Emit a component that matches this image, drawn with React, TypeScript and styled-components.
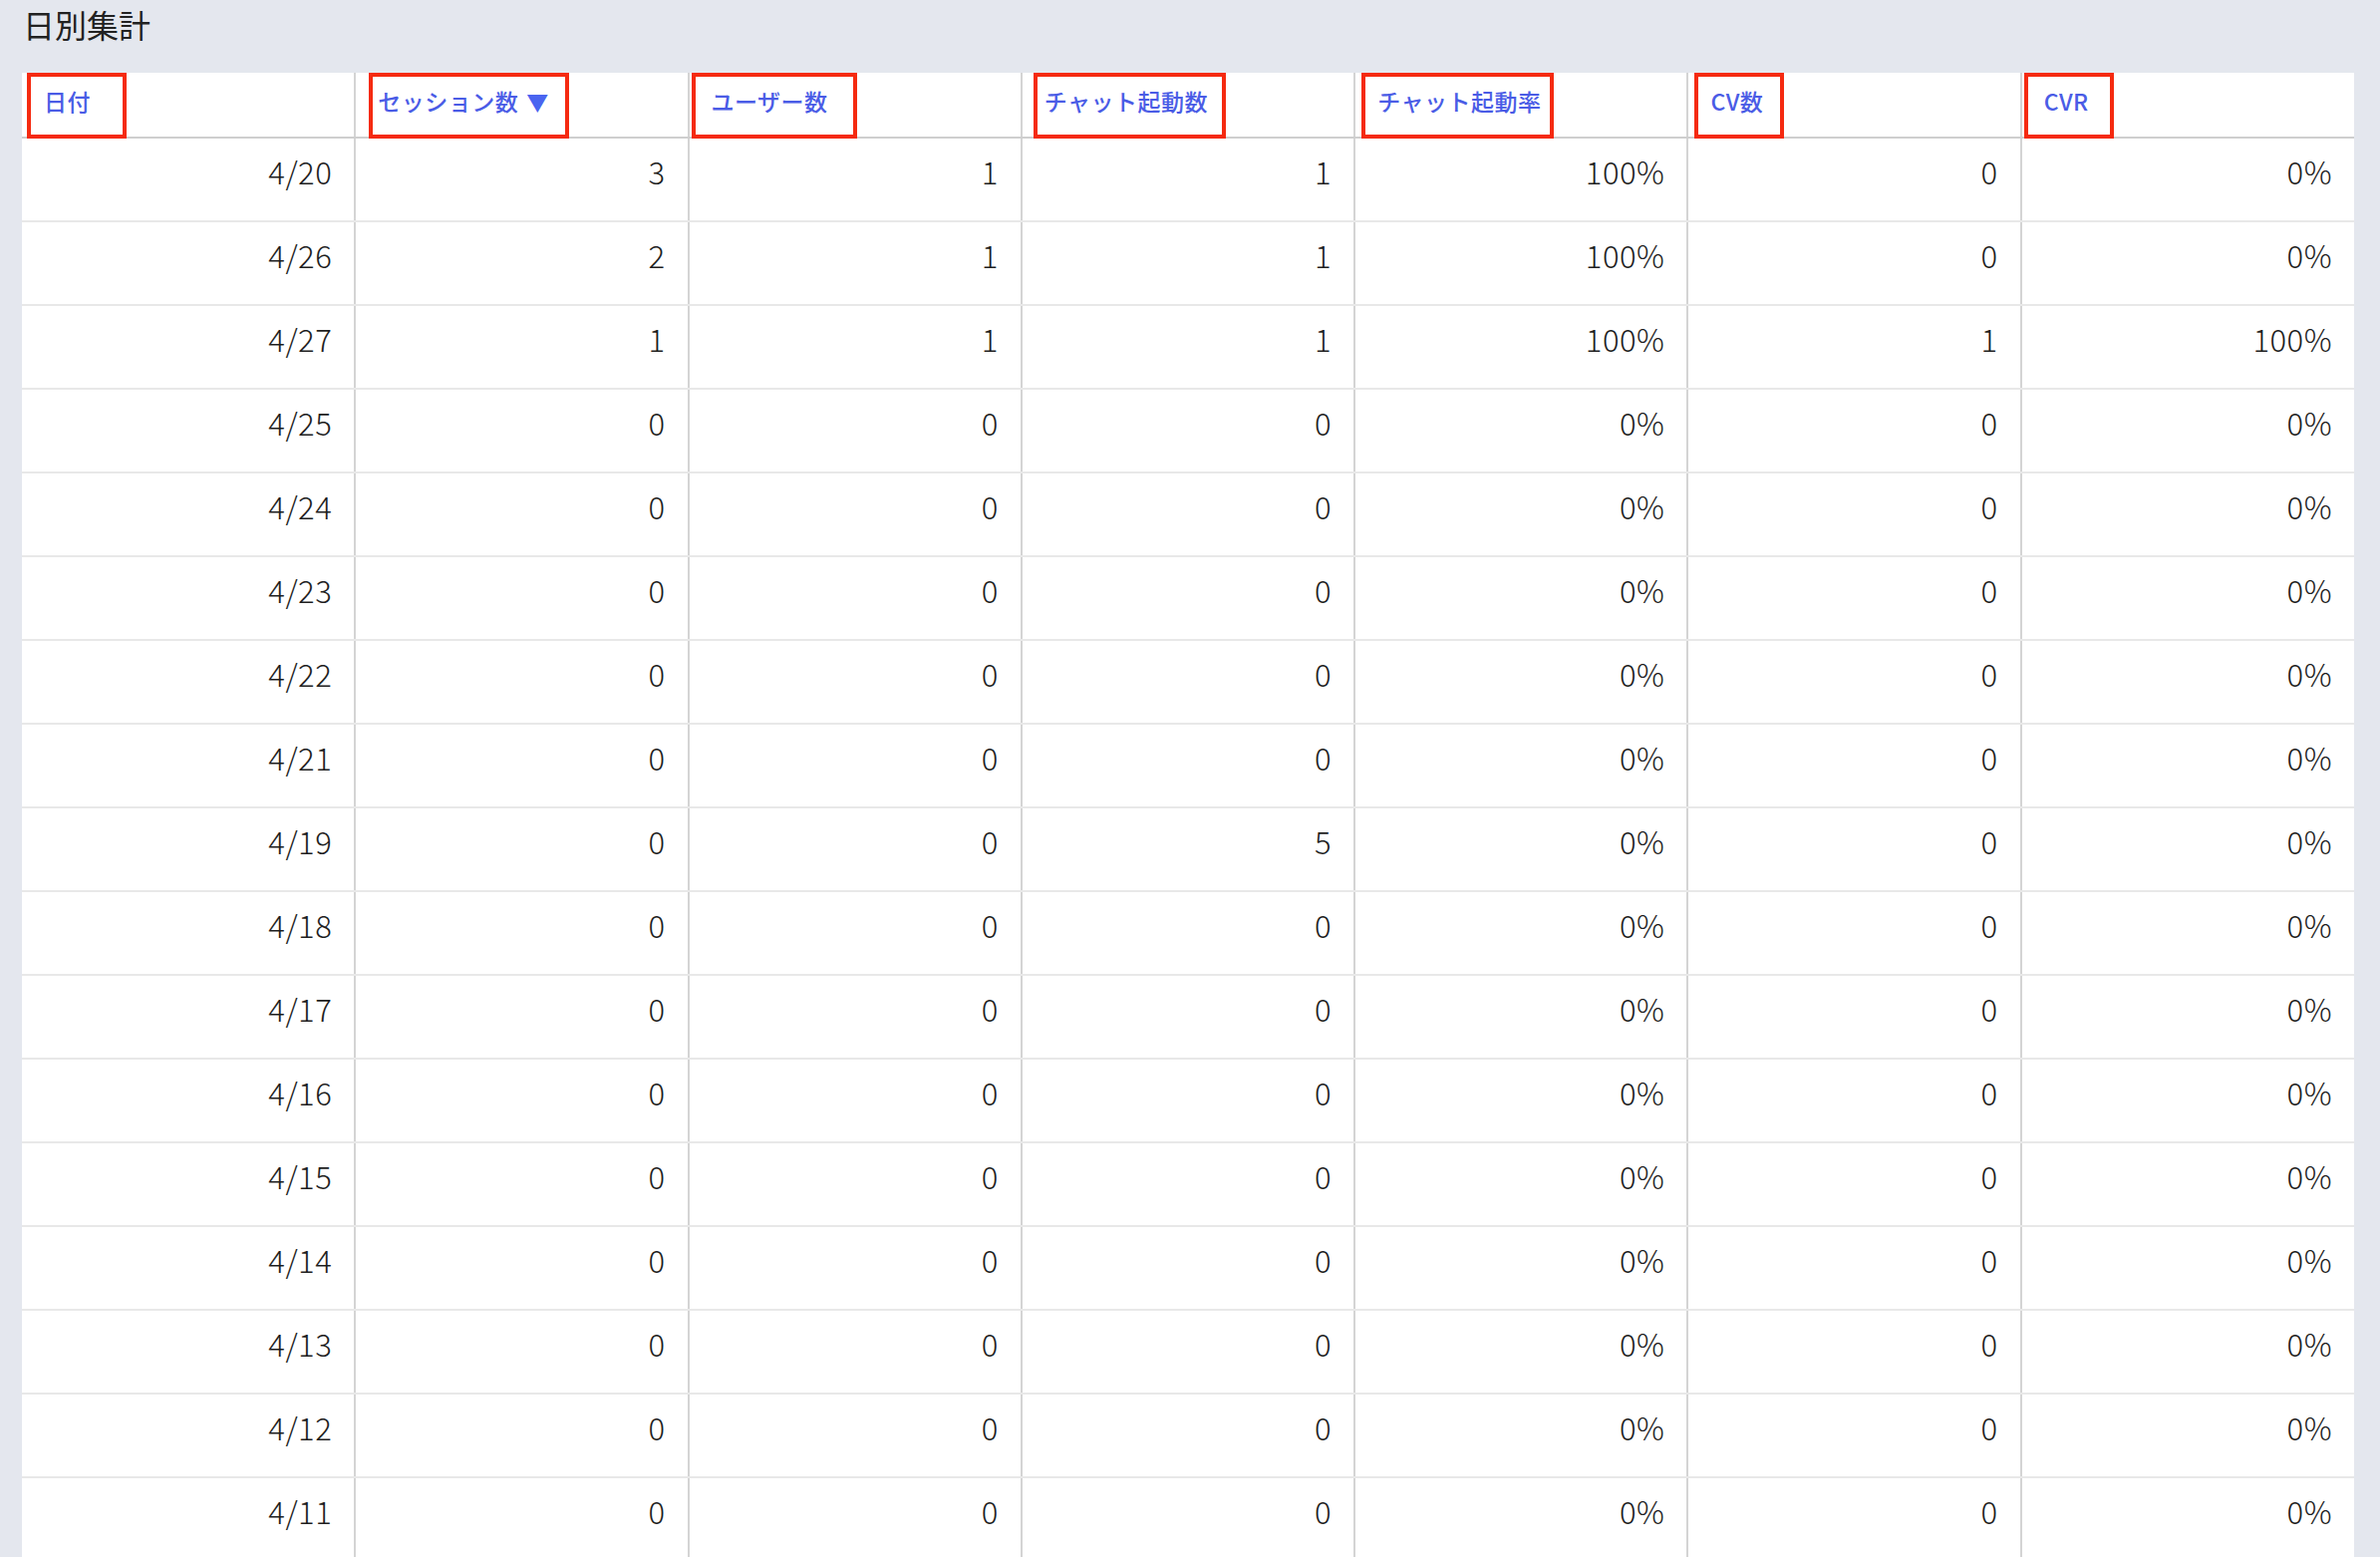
import styled, { createGlobalStyle } from 'styled-components';

const GlobalStyle = createGlobalStyle`
  html, body {
    margin: 0;
    padding: 0;
    background: #e4e7ee;
  }
  body {
    font-family: "Noto Sans CJK JP", "Noto Sans", sans-serif;
    color: #222;
  }
`;

type Row = {
  date: string;
  sessions: number;
  users: number;
  chats: number;
  chatRate: string;
  cv: number;
  cvr: string;
};

const rows: Row[] = [
  { date: '4/20', sessions: 3, users: 1, chats: 1, chatRate: '100%', cv: 0, cvr: '0%' },
  { date: '4/26', sessions: 2, users: 1, chats: 1, chatRate: '100%', cv: 0, cvr: '0%' },
  { date: '4/27', sessions: 1, users: 1, chats: 1, chatRate: '100%', cv: 1, cvr: '100%' },
  { date: '4/25', sessions: 0, users: 0, chats: 0, chatRate: '0%', cv: 0, cvr: '0%' },
  { date: '4/24', sessions: 0, users: 0, chats: 0, chatRate: '0%', cv: 0, cvr: '0%' },
  { date: '4/23', sessions: 0, users: 0, chats: 0, chatRate: '0%', cv: 0, cvr: '0%' },
  { date: '4/22', sessions: 0, users: 0, chats: 0, chatRate: '0%', cv: 0, cvr: '0%' },
  { date: '4/21', sessions: 0, users: 0, chats: 0, chatRate: '0%', cv: 0, cvr: '0%' },
  { date: '4/19', sessions: 0, users: 0, chats: 5, chatRate: '0%', cv: 0, cvr: '0%' },
  { date: '4/18', sessions: 0, users: 0, chats: 0, chatRate: '0%', cv: 0, cvr: '0%' },
  { date: '4/17', sessions: 0, users: 0, chats: 0, chatRate: '0%', cv: 0, cvr: '0%' },
  { date: '4/16', sessions: 0, users: 0, chats: 0, chatRate: '0%', cv: 0, cvr: '0%' },
  { date: '4/15', sessions: 0, users: 0, chats: 0, chatRate: '0%', cv: 0, cvr: '0%' },
  { date: '4/14', sessions: 0, users: 0, chats: 0, chatRate: '0%', cv: 0, cvr: '0%' },
  { date: '4/13', sessions: 0, users: 0, chats: 0, chatRate: '0%', cv: 0, cvr: '0%' },
  { date: '4/12', sessions: 0, users: 0, chats: 0, chatRate: '0%', cv: 0, cvr: '0%' },
  { date: '4/11', sessions: 0, users: 0, chats: 0, chatRate: '0%', cv: 0, cvr: '0%' },
];

// red annotation boxes drawn over the header labels (offset / width per column)
const columns = [
  { label: '日付', sorted: false, boxLeft: 5, boxWidth: 100 },
  { label: 'セッション数', sorted: true, boxLeft: 13, boxWidth: 201 },
  { label: 'ユーザー数', sorted: false, boxLeft: 2, boxWidth: 166 },
  { label: 'チャット起動数', sorted: false, boxLeft: 11, boxWidth: 193 },
  { label: 'チャット起動率', sorted: false, boxLeft: 6, boxWidth: 193 },
  { label: 'CV数', sorted: false, boxLeft: 6, boxWidth: 90 },
  { label: 'CVR', sorted: false, boxLeft: 2, boxWidth: 90 },
];

const App = (): JSX.Element => {
  return (
    <Page>
      <GlobalStyle />
      <Title>日別集計</Title>
      <Table>
        <thead>
          <tr>
            {columns.map((col, idx) => (
              <HeadCell key={idx} $last={idx === columns.length - 1}>
                <SortLink>
                  {col.label}
                  {col.sorted && <Arrow>▼</Arrow>}
                </SortLink>
                <Marker $left={col.boxLeft} $width={col.boxWidth} />
              </HeadCell>
            ))}
          </tr>
        </thead>
        <tbody>
          {rows.map((row) => (
            <tr key={row.date}>
              <Cell>{row.date}</Cell>
              <Cell>{row.sessions}</Cell>
              <Cell>{row.users}</Cell>
              <Cell>{row.chats}</Cell>
              <Cell>{row.chatRate}</Cell>
              <Cell>{row.cv}</Cell>
              <Cell $last>{row.cvr}</Cell>
            </tr>
          ))}
        </tbody>
      </Table>
    </Page>
  );
};

const Page = styled.div`
  height: 1562px;
  overflow: hidden;
  padding: 0 26px 0 22px;
  box-sizing: border-box;
`;

const Title = styled.h2`
  margin: 0;
  padding: 4px 0 0 1px;
  height: 73px;
  box-sizing: border-box;
  font-size: 32px;
  font-weight: 400;
  line-height: 40px;
  color: #222;
`;

const Table = styled.table`
  width: 2340px;
  table-layout: fixed;
  border-collapse: collapse;
  background: #fff;
`;

const HeadCell = styled.th<{ $last?: boolean }>`
  position: relative;
  height: 56px;
  padding: 0 22px 8px;
  text-align: left;
  vertical-align: middle;
  border-bottom: 2px solid #cfcfcf;
  border-right: ${(p) => (p.$last ? 'none' : '2px solid #d4d4d4')};
`;

const SortLink = styled.a`
  display: inline-flex;
  align-items: center;
  gap: 8px;
  font-size: 23px;
  font-weight: 500;
  color: #4a5ce6;
  letter-spacing: 0.5px;
  cursor: pointer;
`;

const Arrow = styled.span`
  font-size: 22px;
  color: #4a64f0;
`;

const Marker = styled.span<{ $left: number; $width: number }>`
  position: absolute;
  top: 0;
  left: ${(p) => p.$left}px;
  width: ${(p) => p.$width}px;
  height: 66px;
  box-sizing: border-box;
  border: 4px solid #f52a10;
  pointer-events: none;
`;

const Cell = styled.td<{ $last?: boolean }>`
  height: 64px;
  padding: 0 22px 18px;
  text-align: right;
  vertical-align: middle;
  font-size: 31px;
  font-weight: 300;
  letter-spacing: 0.5px;
  color: #1e1e1e;
  border-bottom: 2px solid #e8e8e8;
  border-right: ${(p) => (p.$last ? 'none' : '2px solid #d4d4d4')};
`;

export default App;
